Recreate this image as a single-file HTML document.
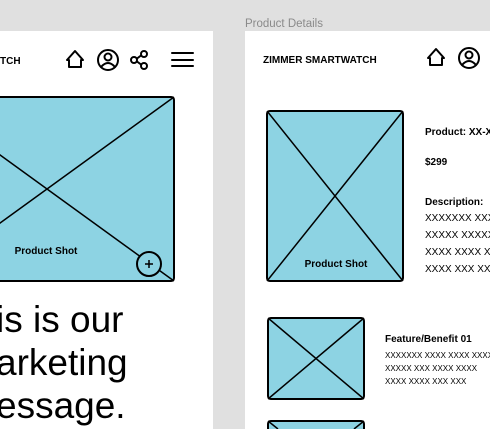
<!DOCTYPE html><html><head><style>
html,body{margin:0;width:490px;height:429px;overflow:hidden;background:#e0e0e0;font-family:"Liberation Sans",sans-serif}
svg{display:block;overflow:hidden}
</style></head><body>
<svg width="490" height="429" xmlns="http://www.w3.org/2000/svg" style="position:absolute;left:0;top:0" font-family="Liberation Sans, sans-serif">
<text x="245" y="27" font-size="11.5" fill="#8a8a8a">Product Details</text>
<rect x="0" y="31" width="213" height="398" fill="#fff"/>
<rect x="245" y="31" width="245" height="398" fill="#fff"/>
<g fill="none" stroke="#000" stroke-width="2" stroke-linejoin="round" stroke-linecap="round">
<path d="M67 60 L75 51 L83 60 L81 60 L81 67 L69 67 L69 60 Z"/>
<circle cx="108" cy="60" r="10"/><circle cx="108" cy="57" r="3.5"/><path d="M101 67 Q108 59 115 67"/>
<circle cx="144" cy="54" r="3"/><circle cx="134" cy="60" r="3"/><circle cx="144" cy="66" r="3"/><path d="M137 58.5 L141 55.5 M137 61.5 L141 64.5"/>
<path d="M172 53 H193 M172 60 H193 M172 66 H193"/>
<path d="M428 58 L436 49 L444 58 L442 58 L442 65 L430 65 L430 58 Z"/>
<circle cx="469" cy="58" r="10"/><circle cx="469" cy="55" r="3.5"/><path d="M462 65 Q469 57 476 65"/>
</g>
<text x="0" y="64" font-size="10" font-weight="bold">TCH</text>
<text x="263" y="63" font-size="10" font-weight="bold">ZIMMER SMARTWATCH</text>
<rect x="-80" y="97" width="254" height="184" rx="3" fill="#8dd3e3" stroke="#000" stroke-width="2"/>
<path d="M174 97 L-80 281 M-80 97 L174 281" stroke="#000" stroke-width="1.5"/>
<circle cx="149" cy="264" r="12" fill="#8dd3e3" stroke="#000" stroke-width="2"/>
<path d="M145 264 H153 M149 260 V268" stroke="#000" stroke-width="1.5"/>
<text x="46" y="254" font-size="10" font-weight="bold" text-anchor="middle">Product Shot</text>
<text x="-4" y="332" font-size="37">is is our</text>
<text x="-4" y="375" font-size="37">arketing</text>
<text x="-4" y="418" font-size="37">essage.</text>
<rect x="267" y="111" width="136" height="170" rx="3" fill="#8dd3e3" stroke="#000" stroke-width="2"/>
<path d="M267 111 L403 281 M403 111 L267 281" stroke="#000" stroke-width="1.5"/>
<text x="336" y="267" font-size="10" font-weight="bold" text-anchor="middle">Product Shot</text>
<g font-size="10">
<text x="425" y="135" font-weight="bold">Product: XX-XX</text>
<text x="425" y="165" font-weight="bold">$299</text>
<text x="425" y="205" font-weight="bold">Description:</text>
<text x="425" y="221">XXXXXXX XXXX</text>
<text x="425" y="238">XXXXX XXXXX</text>
<text x="425" y="255">XXXX XXXX XX</text>
<text x="425" y="272">XXXX XXX XXX</text>
<text x="385" y="342" font-weight="bold">Feature/Benefit 01</text>
</g>
<g font-size="8">
<text x="385" y="358">XXXXXXX XXXX XXXX XXXX</text>
<text x="385" y="371">XXXXX XXX XXXX XXXX</text>
<text x="385" y="384">XXXX XXXX XXX XXX</text>
</g>
<rect x="268" y="318" width="96" height="81" rx="3" fill="#8dd3e3" stroke="#000" stroke-width="2"/>
<path d="M268 318 L364 399 M364 318 L268 399" stroke="#000" stroke-width="1.5"/>
<rect x="268" y="421" width="96" height="40" rx="3" fill="#8dd3e3" stroke="#000" stroke-width="2"/>
<path d="M268 421 L278 429 M364 421 L354 429" stroke="#000" stroke-width="1.5"/>
</svg>
</body></html>
